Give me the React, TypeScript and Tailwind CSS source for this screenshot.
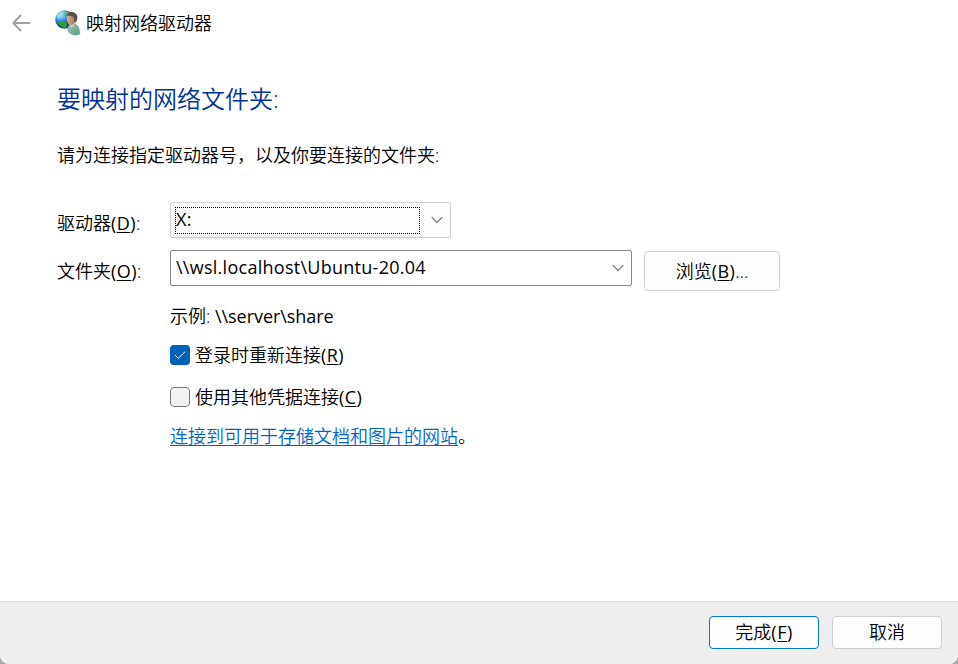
import React from 'react';

function Key({ children }: { children: string }) {
  return (
    <span className="font-normal tracking-[0.45px]">
      (<span className="underline decoration-1 underline-offset-2">{children}</span>)
    </span>
  );
}

function Chevron() {
  return (
    <svg width="12" height="8" viewBox="0 0 12 8" fill="none" stroke="#6a6a6a" strokeWidth="1.1">
      <path d="M0.7 1.2 6 6.500l5.300-5.300" />
    </svg>
  );
}

function NetworkUserIcon() {
  return (
    <svg width="26" height="26" viewBox="0 0 26 26">
      <defs>
        <radialGradient id="globe" cx="0.3" cy="0.25" r="0.8">
          <stop offset="0" stopColor="#b9eaff" />
          <stop offset="0.35" stopColor="#3f9ee8" />
          <stop offset="0.8" stopColor="#1233a8" />
        </radialGradient>
        <linearGradient id="coat" x1="0" y1="0" x2="1" y2="1">
          <stop offset="0" stopColor="#9fcbb2" />
          <stop offset="1" stopColor="#559b80" />
        </linearGradient>
        <linearGradient id="face" x1="0" y1="0" x2="1" y2="0">
          <stop offset="0" stopColor="#dcae86" />
          <stop offset="1" stopColor="#a87850" />
        </linearGradient>
      </defs>
      <circle cx="9.500" cy="9.500" r="9.300" fill="url(#globe)" />
      <path d="M2 5.500C3.500 2.500 6.500 1 10 1.300L8.500 4 6 5 5 8 2.500 9z" fill="#a5dcc5" opacity="0.7" />
      <path d="M3 12l5-1.300 4 2.300-1 5C7 18 4 15.500 3 12z" fill="#2da52b" />
      <path d="M10 1.300l4 1.500-1 2.500-3-.5z" fill="#62c653" />
      <path d="M14 15l3 1 3-2c3 1 4.700 4 4.800 10-2.500 1.500-7 1.500-10.500-1.300-1.800-1.500-2.300-5-.3-7.700z" fill="url(#coat)" stroke="#689b85" strokeWidth="0.5" />
      <path d="M14.500 14l1.800 4 3-3.500-1-2z" fill="#e3d8c5" />
      <path d="M12 5.500c-.8 3 .2 8.500 3 9.800 2.700.7 5.500-2.600 5.500-6.800L18 4z" fill="url(#face)" />
      <path d="M11.200 5.500c1-3.200 4.700-4.200 7.700-3 3.500 1.200 4.300 5 2.800 8.500l-2 2.200-.7-5c-.5-2-3.500-2.200-7.800-2.700z" fill="#5c5048" />
    </svg>
  );
}

export default function App() {
  return (
    <div className="bg-[#a9a9a9]">
      <main className="flex h-[664px] w-[958px] flex-col overflow-hidden rounded-b-[9px] bg-white font-['Open_Sans','Noto_Sans_CJK_SC',sans-serif] text-[18px] leading-6 font-[350] whitespace-nowrap text-black">
        <header className="flex h-[46px] shrink-0 items-center pl-3">
          <svg width="19" height="18" viewBox="0 0 19 18" fill="none" stroke="#a0a0a0" strokeWidth="1.8" strokeLinecap="round" strokeLinejoin="round">
            <path d="M8.500 1.500 1.200 9l7.300 7.500M1.500 9H17.500" />
          </svg>
          <div className="ml-6"><NetworkUserIcon /></div>
          <span className="ml-[5px]">映射网络驱动器</span>
        </header>

        <section className="flex grow flex-col pl-[57px]">
          <h1 className="mt-[37px] text-[24px] leading-8 text-[#003399]">要映射的网络文件夹:</h1>
          <p className="mt-7">请为连接指定驱动器号，以及你要连接的文件夹:</p>

          <div className="mt-[35px] flex h-9 items-center">
            <label className="w-[113px] pt-1.5">驱动器<Key>D</Key>:</label>
            <div className="flex h-9 w-[281px] items-center justify-between rounded-[2px] border border-[#d0d0d0] bg-[#fdfdfd] pr-[7px] pl-1 font-normal">
              <div className="flex h-[27px] w-[245px] items-center border border-dotted border-black pb-0.5 tracking-[0.3px]">X:</div>
              <Chevron />
            </div>
          </div>

          <div className="mt-3 flex h-[41px] items-start">
            <label className="w-[113px] pt-[9px]">文件夹<Key>O</Key>:</label>
            <div className="flex h-9 w-[462px] items-center justify-between rounded-[2px] border border-[#868686] bg-white pr-[7px] pl-[5px] font-normal">
              <span className="pb-0.5 tracking-[0.27px]">\\wsl.localhost\Ubuntu-20.04</span>
              <Chevron />
            </div>
            <button className="mt-px ml-3 h-10 w-[136px] rounded-[4px] border border-[#d0d0d0] bg-[#fdfdfd]">浏览<Key>B</Key>...</button>
          </div>

          <div className="flex flex-col pl-[113px]">
            <p className="mt-[13px]">示例: <span className="font-normal tracking-[-0.05px]">\\server\share</span></p>
            <label className="mt-[15px] flex items-center">
              <span className="mr-[5px] flex size-5 items-center justify-center rounded-[4px] bg-[#005fb8]">
                <svg width="12" height="10" viewBox="0 0 12 10" fill="none" stroke="white" strokeWidth="1">
                  <path d="m1 5 3.300 3.300L11 1.700" />
                </svg>
              </span>
              登录时重新连接<Key>R</Key>
            </label>
            <label className="mt-[18px] flex items-center">
              <span className="mr-[5px] size-5 rounded-[4px] border border-[#767676] bg-[#f3f3f3]" />
              使用其他凭据连接<Key>C</Key>
            </label>
            <p className="mt-[15px]">
              <a className="text-[#0066cc] underline decoration-1 underline-offset-2">连接到可用于存储文档和图片的网站</a>。
            </p>
          </div>
        </section>

        <footer className="flex h-[63px] shrink-0 justify-end gap-[13px] border-t border-[#dfdfdf] bg-[#efefef] pt-3.5 pr-4">
          <button className="h-[33px] w-[110px] rounded-[4px] border border-[#0078d4] bg-[#fdfdfd] pb-0.5">完成<Key>F</Key></button>
          <button className="h-[33px] w-[110px] rounded-[4px] border border-[#d0d0d0] bg-[#fdfdfd] pb-0.5">取消</button>
        </footer>
      </main>
    </div>
  );
}
